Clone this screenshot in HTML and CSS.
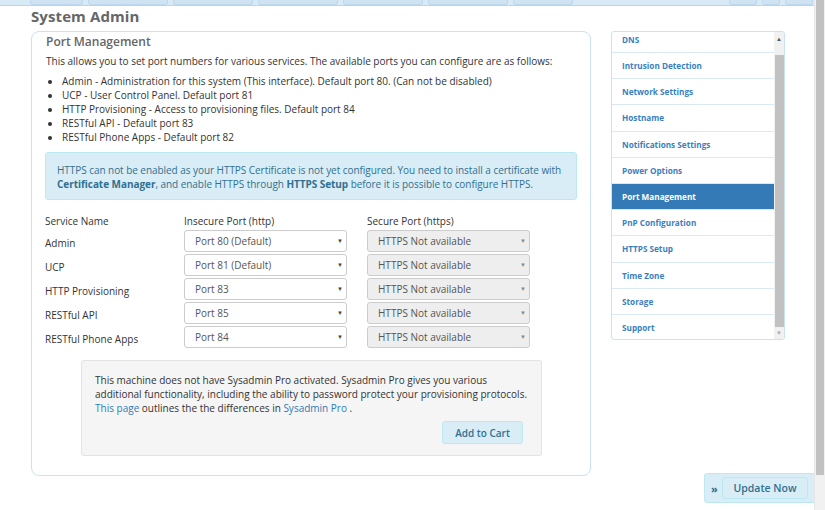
FILE: index.html
```html
<!DOCTYPE html>
<html>
<head>
<meta charset="utf-8">
<link rel="stylesheet" href="styles.css">
</head>
<body>
<div class="topbar">
  <span class="tab t1"></span><span class="tab t2"></span><span class="tab t2"></span><span class="tab t2"></span><span class="tab t3"></span><span class="tab t3"></span><span class="tab t4"></span>
  <span class="spacer"></span>
  <span class="tab t5"></span><span class="tab t6"></span><span class="tab t5"></span>
</div>
<div class="page">
  <h1 class="title">System Admin</h1>
  <div class="layout">
    <div class="panel">
      <h2 class="panel-title">Port Management</h2>
      <p class="intro">This allows you to set port numbers for various services. The available ports you can configure are as follows:</p>
      <ul class="ports">
        <li>Admin - Administration for this system (This interface). Default port 80. (Can not be disabled)</li>
        <li>UCP - User Control Panel. Default port 81</li>
        <li>HTTP Provisioning - Access to provisioning files. Default port 84</li>
        <li>RESTful API - Default port 83</li>
        <li>RESTful Phone Apps - Default port 82</li>
      </ul>
      <div class="alert">HTTPS can not be enabled as your HTTPS Certificate is not yet configured. You need to install a certificate with <b>Certificate Manager</b>, and enable HTTPS through <b>HTTPS Setup</b> before it is possible to configure HTTPS.</div>
      <div class="grid">
        <div class="head">Service Name</div><div class="head">Insecure Port (http)</div><div class="head">Secure Port (https)</div>
        <div class="name">Admin</div><div class="sel">Port 80 (Default)<span class="arr">▼</span></div><div class="sel dis">HTTPS Not available<span class="arr">▼</span></div>
        <div class="name">UCP</div><div class="sel">Port 81 (Default)<span class="arr">▼</span></div><div class="sel dis">HTTPS Not available<span class="arr">▼</span></div>
        <div class="name">HTTP Provisioning</div><div class="sel">Port 83<span class="arr">▼</span></div><div class="sel dis">HTTPS Not available<span class="arr">▼</span></div>
        <div class="name">RESTful API</div><div class="sel">Port 85<span class="arr">▼</span></div><div class="sel dis">HTTPS Not available<span class="arr">▼</span></div>
        <div class="name">RESTful Phone Apps</div><div class="sel">Port 84<span class="arr">▼</span></div><div class="sel dis">HTTPS Not available<span class="arr">▼</span></div>
      </div>
      <div class="pro">
        <p>This machine does not have Sysadmin Pro activated. Sysadmin Pro gives you various additional functionality, including the ability to password protect your provisioning protocols. <a>This page</a> outlines the the differences in <a>Sysadmin Pro</a> .</p>
        <div class="pro-actions"><button class="btn-info">Add to Cart</button></div>
      </div>
    </div>
    <div class="side">
      <div class="side-list">
        <div class="item first">DNS</div>
        <div class="item">Intrusion Detection</div>
        <div class="item">Network Settings</div>
        <div class="item">Hostname</div>
        <div class="item">Notifications Settings</div>
        <div class="item">Power Options</div>
        <div class="item active">Port Management</div>
        <div class="item">PnP Configuration</div>
        <div class="item">HTTPS Setup</div>
        <div class="item">Time Zone</div>
        <div class="item">Storage</div>
        <div class="item last">Support</div>
      </div>
      <div class="side-scroll">
        <span class="up">▲</span>
        <span class="thumb"></span>
        <span class="down">▼</span>
      </div>
    </div>
  </div>
</div>
<div class="update"><span class="chev">»</span><button class="btn-update">Update Now</button></div>
<div class="pagescroll"><span class="pthumb"></span></div>
</body>
</html>
```
FILE: styles.css
```css
* { box-sizing: border-box; }
html, body { margin: 0; padding: 0; }
body {
  width: 825px; height: 510px; overflow: hidden; position: relative;
  font-family: "Open Sans", "Liberation Sans", sans-serif;
  font-size: 10px; color: #333; background: #fff;
}
.topbar {
  height: 6px; background: #d9eaf7; border-bottom: 1px solid #b3d7f0;
  display: flex; gap: 5px; padding-left: 30px; padding-right: 12px;
}
.tab { height: 5px; background: #cfe3f3; border: 1px solid #bcd8ee; border-top: none; border-radius: 0 0 3px 3px; }
.t1 { width: 53px; } .t2 { width: 80px; } .t3 { width: 80px; } .t4 { width: 60px; }
.t5 { width: 28px; } .t6 { width: 18px; }
.spacer { flex: 1; }
.page { padding-left: 31px; }
.title {
  margin: -1px 0 0; font-size: 15px; font-weight: 700; color: #666; line-height: 22px; letter-spacing: 0.1px;
}
.layout { display: flex; gap: 20px; margin-top: 4px; align-items: flex-start; }
.panel {
  width: 560px; height: 445px; border: 1px solid #c9e2f5; border-radius: 8px; padding: 0 13px 0 13px;
}
.panel-title { margin: 1px 0 0 1px; font-size: 12px; font-weight: 600; color: #666; line-height: 18px; }
.intro { margin: 3px 0 6px 1px; line-height: 14px; }
.ports { margin: 0 0 8px; padding-left: 17px; line-height: 14px; }
.alert {
  background: #d9edf7; border: 1px solid #bce8f1; border-radius: 3px; color: #31708f;
  padding: 10px 6px 8px 11px; line-height: 14px; letter-spacing: -0.05px;
}
.alert b { font-weight: 700; }
.grid {
  display: grid; grid-template-columns: 119px 163px 163px; column-gap: 20px; row-gap: 2px;
  margin-top: 14px; align-items: center;
}
.head { line-height: 14px; }
.name { padding-top: 3px; }
.sel {
  height: 22px; border: 1px solid #ccc; border-radius: 3px; background: #fff; color: #555;
  padding: 0 0 0 10px; line-height: 20px; position: relative;
}
.sel.dis { background: #eee; }
.arr { position: absolute; right: 3px; top: 0; font-size: 6px; color: #444; }
.sel.dis .arr { color: #888; }
.pro {
  margin: 12px 35px 0 36px; background: #f5f5f5; border: 1px solid #e3e3e3; border-radius: 3px;
  padding: 12px 12px 11px 13px;
}
.pro p { margin: 0; line-height: 14px; }
.pro a { color: #337ab7; }
.pro-actions { display: flex; justify-content: flex-end; margin-top: 6px; padding-right: 6px; }
.btn-info {
  font-family: inherit; font-size: 10px; font-weight: 600; color: #31708f;
  background: #d9edf7; border: 1px solid #bce8f1; border-radius: 3px;
  width: 81px; height: 23px; padding: 0;
}
.side {
  width: 174px; height: 309px; border: 1px solid #c9e2f5; border-radius: 3px; display: flex; overflow: hidden;
}
.side-list { flex: 1; margin-top: -13px; }
.item {
  height: 26.2px; border-bottom: 1px solid #dbe9f5; padding-left: 10px;
  font-size: 8.2px; font-weight: 700; color: #3a7fc0; display: flex; align-items: center;
}
.item.first { height: 34px; padding-top: 8px; }
.item.last { border-bottom: none; }
.item.active { background: #337ab7; color: #fff; }
.side-scroll { width: 10px; background: #f1f1f1; display: flex; flex-direction: column; align-items: center; }
.up, .down { font-size: 6px; color: #555; height: 12px; line-height: 12px; }
.down { color: #aaa; }
.up { margin-top: 1px; }
.thumb { width: 9px; flex: 1; background: #c1c1c1; margin: 10px 0 0; }
.update {
  position: absolute; left: 704px; top: 473px; width: 118px; height: 30px;
  background: #d9edf7; border: 1px solid #bce8f1; border-radius: 3px;
  display: flex; align-items: center; padding-left: 6px; gap: 2px;
}
.chev { color: #31708f; font-weight: 700; font-size: 11px; width: 9px; }
.btn-update {
  font-family: inherit; font-size: 10.5px; font-weight: 600; color: #31708f;
  background: #d9edf7; border: 1px solid #bce8f1; border-radius: 3px;
  width: 86px; height: 22px; padding: 0;
}
.pagescroll {
  position: absolute; right: 0; top: 0; width: 11px; height: 510px; background: #f1f1f1;
  border-left: 1px solid #e6e6e6;
}
.pthumb { display: block; width: 8px; margin-left: 1px; height: 475px; background: #c1c1c1; }
```
